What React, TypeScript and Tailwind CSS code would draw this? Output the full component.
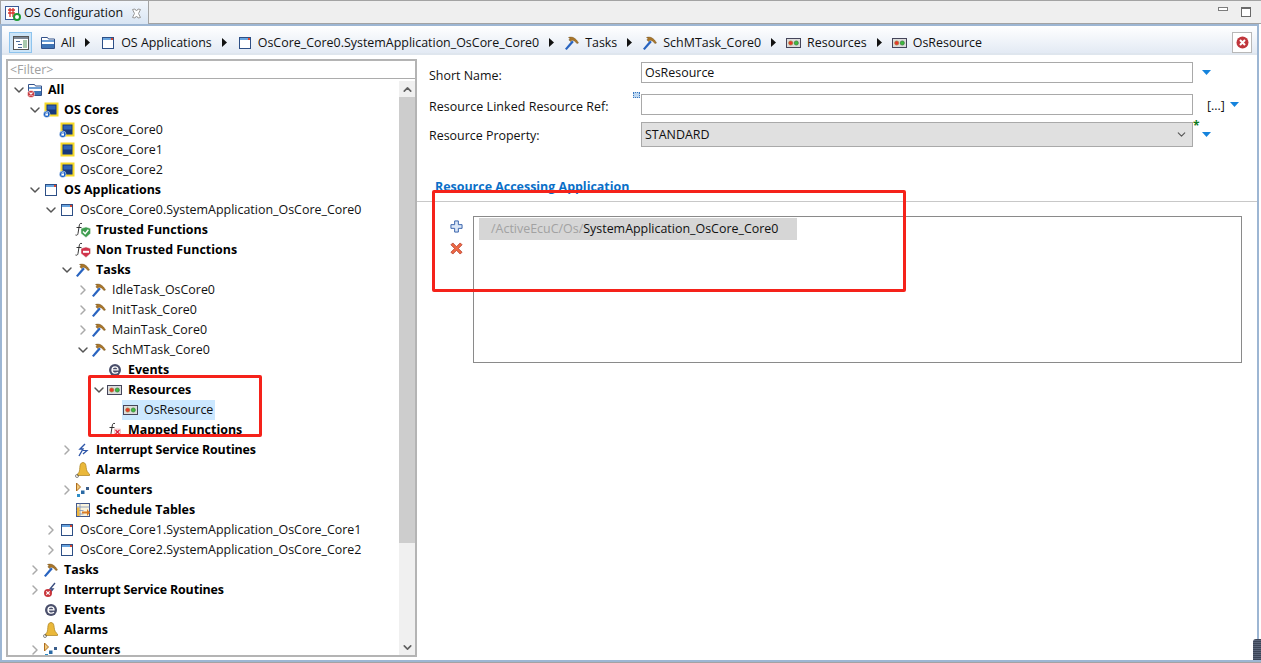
import React from 'react';
import { ChevronDown, ChevronRight, ChevronUp } from 'lucide-react';

type IconName = 'folder' | 'folderErr' | 'chip' | 'chipLock' | 'app' | 'fnOk' | 'fnNo' | 'fnMap' | 'task' | 'event' | 'res' | 'irq' | 'irqErr' | 'bell' | 'counter' | 'table';

const IconImg: React.FC<{ name: IconName }> = ({ name }) => {
  const box = { width: 16, height: 16, viewBox: '0 0 16 16', className: 'shrink-0' };
  switch (name) {
    case 'folder':
    case 'folderErr':
      return (
        <svg {...box}>
          <path d="M1.500 2.500h6l1 1.500h6v9.500h-13z" fill="#fff" stroke="#33528a" />
          <rect x="2" y="5" width="12" height="2" fill="#6d9fd6" />
          <rect x="2" y="9" width="12" height="4" fill="#3f74b5" />
          {name === 'folderErr' && (
            <>
              <circle cx="4" cy="12" r="3.600" fill="#c9363c" stroke="#fff" strokeWidth=".6" />
              <path d="m2.500 10.500 3 3m0-3-3 3" stroke="#fff" strokeWidth="1.100" />
            </>
          )}
        </svg>
      );
    case 'chip':
    case 'chipLock':
      return (
        <svg {...box}>
          <rect x="1.500" y=".5" width="14" height="14" fill="#f6d92a" />
          <rect x="3.500" y="2.500" width="10" height="10" fill="#16397c" />
          <rect x="4.500" y="3.500" width="8" height="4" fill="#2f62b4" />
          {name === 'chipLock' && (
            <>
              <circle cx="3.700" cy="12.300" r="3.300" fill="#1c62c4" stroke="#fff" strokeWidth=".5" />
              <rect x="2.400" y="11.600" width="2.600" height="2" fill="#fff" />
              <path d="M2.900 11.600v-1h1.600v1" fill="none" stroke="#fff" strokeWidth=".6" />
            </>
          )}
        </svg>
      );
    case 'app':
      return (
        <svg {...box}>
          <rect x="2.500" y="2.500" width="11" height="11" fill="#fff" stroke="#2d4f86" />
          <rect x="3" y="3" width="10" height="2" fill="#68a4df" />
          <rect x="11" y="3" width="2" height="2" fill="#d9482f" />
        </svg>
      );
    case 'fnOk':
    case 'fnNo':
      return (
        <svg {...box}>
          <path d="M7 1.500C5 1 4.500 2 4.200 4L3 11.500C2.700 13 2 13.500.5 13M1.500 5.500h5" fill="none" stroke="#222" strokeWidth=".9" />
          <path d="M6 6.500 11 5l4.500 1.500v5L11 15.500 6 11.500z" fill={name === 'fnOk' ? '#3e9d4f' : '#d1344b'} stroke="#e8f0e8" strokeWidth=".5" />
          {name === 'fnOk'
            ? <path d="m8 9.500 2.200 2.300 3.200-4" fill="none" stroke="#fff" strokeWidth="1.400" />
            : <rect x="8" y="8.800" width="6" height="2" fill="#fff" />}
        </svg>
      );
    case 'fnMap':
      return (
        <svg {...box}>
          <path d="M8 1.500C6 1 5.500 2 5.200 4L4 11.500C3.700 13 3 13.500 1.500 13M2.500 5.500h5" fill="none" stroke="#222" strokeWidth=".9" />
          <rect x="7.500" y="7" width="6" height="6" fill="#fbe5e5" stroke="#e8a0a0" strokeWidth=".5" />
          <path d="m8.500 8 4 4m0-4-4 4" stroke="#d2203c" strokeWidth="1.100" />
        </svg>
      );
    case 'task':
      return (
        <svg {...box}>
          <path d="m1 13.800 7-8.300 1.800 1.500L2.700 15z" fill="#2763c0" />
          <path d="M4.500 2.500C8 1.200 12 3 14.500 8l-1.600.6C11.500 6.300 9.500 5 7.800 5.200L6.500 6.500 4.800 4.800 6.200 3.800z" fill="#a9762a" stroke="#6b4a18" strokeWidth=".4" />
        </svg>
      );
    case 'event':
      return (
        <svg {...box}>
          <circle cx="8" cy="8" r="6" fill="#4a4f6b" />
          <path d="M4.800 7.800h6.200c0-4-6-4-6 .2 0 3.500 4 3.800 6 2.200" fill="none" stroke="#fff" strokeWidth="1.300" />
        </svg>
      );
    case 'res':
      return (
        <svg {...box}>
          <rect x=".5" y="3.500" width="14" height="9" fill="#dcdcdc" stroke="#45455a" />
          <circle cx="4.700" cy="8" r="2.100" fill="#e8352d" stroke="#9b7a20" strokeWidth=".6" />
          <circle cx="10.300" cy="8" r="2.100" fill="#3fbb3f" stroke="#2a6c2a" strokeWidth=".6" />
        </svg>
      );
    case 'irq':
      return (
        <svg {...box}>
          <path d="M10 2 5 7h3l-4 7" fill="none" stroke="#2e56a8" strokeWidth="1.400" />
          <path d="M8 8.500h4L8 12" fill="none" stroke="#2e56a8" strokeWidth="1.200" />
        </svg>
      );
    case 'irqErr':
      return (
        <svg {...box}>
          <path d="M12 1 7 7h3L6 12" fill="none" stroke="#3d4f80" strokeWidth="1.400" />
          <circle cx="5" cy="11" r="4" fill="#c9363c" />
          <path d="m3.300 9.300 3.400 3.400m0-3.400-3.400 3.400" stroke="#fff" strokeWidth="1.200" />
        </svg>
      );
    case 'bell':
      return (
        <svg {...box}>
          <path d="M8 .500c2.500 0 3 2.500 3.200 5 .2 3 1.300 5 3.300 6.500v1.500H2.500V12C4.500 10.500 4.600 8.500 4.800 5.500 5 3 5.500.500 8 .500z" fill="#eab83a" stroke="#a9801c" strokeWidth=".7" />
          <circle cx="2" cy="14" r="1.500" fill="none" stroke="#555" strokeWidth=".7" />
        </svg>
      );
    case 'counter':
      return (
        <svg {...box}>
          <path d="M1.500 1v8l4-4z" fill="#f3cb7c" stroke="#ae6d1d" />
          <rect x="2" y="12" width="3" height="3" fill="#2f8ec7" />
          <rect x="6" y="8.500" width="3.500" height="3.500" fill="#2a6aa5" />
          <rect x="11" y="5" width="3" height="3" fill="#3a5d8a" />
        </svg>
      );
    case 'table':
      return (
        <svg {...box}>
          <rect x="1.500" y="1.500" width="13" height="13" fill="#fbf4dc" stroke="#44588a" />
          <path d="M1.500 5h13M1.500 8.500h7M1.500 12h7M5 1.500v13" stroke="#7b8fb8" strokeWidth=".8" />
          <rect x="2" y="5.500" width="2.500" height="8.500" fill="#eeb53c" />
          <path d="M7 9.500h5V7l3 3.500-3 3.500v-2.500H7z" fill="#d97b24" />
        </svg>
      );
  }
};

type Row = { depth: number; open?: boolean; icon: IconName; label: string; bold?: boolean; selected?: boolean; tight?: boolean };

const rows: Row[] = [
  { depth: 0, open: true, icon: 'folderErr', label: 'All', bold: true },
  { depth: 1, open: true, icon: 'chipLock', label: 'OS Cores', bold: true },
  { depth: 2, icon: 'chipLock', label: 'OsCore_Core0' },
  { depth: 2, icon: 'chip', label: 'OsCore_Core1' },
  { depth: 2, icon: 'chipLock', label: 'OsCore_Core2' },
  { depth: 1, open: true, icon: 'app', label: 'OS Applications', bold: true },
  { depth: 2, open: true, icon: 'app', label: 'OsCore_Core0.SystemApplication_OsCore_Core0' },
  { depth: 3, icon: 'fnOk', label: 'Trusted Functions', bold: true },
  { depth: 3, icon: 'fnNo', label: 'Non Trusted Functions', bold: true },
  { depth: 3, open: true, icon: 'task', label: 'Tasks', bold: true },
  { depth: 4, open: false, icon: 'task', label: 'IdleTask_OsCore0' },
  { depth: 4, open: false, icon: 'task', label: 'InitTask_Core0' },
  { depth: 4, open: false, icon: 'task', label: 'MainTask_Core0' },
  { depth: 4, open: true, icon: 'task', label: 'SchMTask_Core0' },
  { depth: 5, icon: 'event', label: 'Events', bold: true },
  { depth: 5, open: true, icon: 'res', label: 'Resources', bold: true },
  { depth: 6, icon: 'res', label: 'OsResource', selected: true },
  { depth: 5, icon: 'fnMap', label: 'Mapped Functions', bold: true },
  { depth: 3, open: false, icon: 'irq', label: 'Interrupt Service Routines', bold: true, tight: true },
  { depth: 3, icon: 'bell', label: 'Alarms', bold: true },
  { depth: 3, open: false, icon: 'counter', label: 'Counters', bold: true },
  { depth: 3, icon: 'table', label: 'Schedule Tables', bold: true },
  { depth: 2, open: false, icon: 'app', label: 'OsCore_Core1.SystemApplication_OsCore_Core1' },
  { depth: 2, open: false, icon: 'app', label: 'OsCore_Core2.SystemApplication_OsCore_Core2' },
  { depth: 1, open: false, icon: 'task', label: 'Tasks', bold: true },
  { depth: 1, open: false, icon: 'irqErr', label: 'Interrupt Service Routines', bold: true, tight: true },
  { depth: 1, icon: 'event', label: 'Events', bold: true },
  { depth: 1, icon: 'bell', label: 'Alarms', bold: true },
  { depth: 1, open: false, icon: 'counter', label: 'Counters', bold: true },
];

const crumbs: { icon: IconName; label: string }[] = [
  { icon: 'folder', label: 'All' },
  { icon: 'app', label: 'OS Applications' },
  { icon: 'app', label: 'OsCore_Core0.SystemApplication_OsCore_Core0' },
  { icon: 'task', label: 'Tasks' },
  { icon: 'task', label: 'SchMTask_Core0' },
  { icon: 'res', label: 'Resources' },
  { icon: 'res', label: 'OsResource' },
];

const DropArrow = () => (
  <svg width="9" height="5" viewBox="0 0 9 5" className="shrink-0">
    <path d="M0 0h9L4.500 5z" fill="#1583dc" />
  </svg>
);

const TreeRow: React.FC<{ row: Row }> = ({ row }) => (
  <div className="flex h-5 items-center" style={{ paddingLeft: 3 + row.depth * 16 }}>
    <span className="flex w-4 shrink-0 justify-center">
      {row.open === true && <ChevronDown size={16} strokeWidth={2.2} className="text-[#555]" />}
      {row.open === false && <ChevronRight size={16} strokeWidth={2.2} className="text-[#aaa]" />}
    </span>
    <span className={`flex h-5 items-center gap-[5px] pr-[2px] ${row.selected ? 'ml-[-1px] bg-[#cce8ff] pl-[1px]' : ''}`}>
      <IconImg name={row.icon} />
      <span className={`whitespace-nowrap ${row.bold ? 'font-bold text-black' : 'text-[#111]'} ${row.tight ? 'tracking-[-0.15px]' : ''}`}>{row.label}</span>
    </span>
  </div>
);

const App: React.FC = () => {
  return (
    <div className="relative flex h-[663px] w-[1261px] flex-col overflow-hidden bg-white font-['Open_Sans',sans-serif] text-[12.45px] leading-none text-[#111]">
      {/* tab strip */}
      <div className="flex h-[24px] shrink-0 items-stretch">
        <div className="flex w-[149px] items-center gap-[3px] border-x border-t border-[#a3a3a3] bg-gradient-to-b from-[#f2f6fb] to-[#d9e5f3] pl-[4px] pt-[1px]">
          <svg width="16" height="16" viewBox="0 0 16 16" className="shrink-0">
            <rect x=".5" y="1.500" width="13" height="13" fill="#fff" stroke="#3a5a95" />
            <path d="M3 5h7M3 8h7M5 3v9M8 3v9" stroke="#d8342c" strokeWidth="1.300" />
            <circle cx="12" cy="12" r="3" fill="#fff" stroke="#1e9a32" strokeWidth="2" />
          </svg>
          <span className="whitespace-nowrap pt-[1px]">OS Configuration</span>
          <svg width="11" height="11" viewBox="0 0 11 11" className="ml-[5px] shrink-0">
            <path d="M1.500 1.500 4 1l1.500 2L7 1l2.500.5L7.500 5.500l2 4L7 10 5.500 8 4 10l-2.500-.5 2-4z" fill="#fff" stroke="#9a9a9a" />
          </svg>
        </div>
        <div className="flex flex-1 items-center justify-end gap-[13px] border-y border-[#a3a3a3] bg-[#efefef] pr-[10px]">
          <span className="mb-[6px] h-[4px] w-[10px] border border-[#7d7d7d] bg-white" />
          <span className="h-[10px] w-[10px] border border-t-2 border-[#6a6a6a] bg-white" />
        </div>
      </div>

      {/* editor frame */}
      <div className="mr-[2px] flex min-h-0 flex-1 flex-col border-x-2 border-t-2 border-[#9db6d3]">
        <div className="flex h-[29px] shrink-0 items-center border-b-2 border-[#dfe6ee] bg-gradient-to-b from-white to-[#e3eaf4] pl-[7px] pr-[5px] pt-[6px]">
          <div className="flex h-[21px] w-[23px] items-center justify-center border border-[#8ec4ee] bg-[#cce4f7]">
            <svg width="16" height="14" viewBox="0 0 16 14">
              <rect x=".5" y=".5" width="15" height="13" fill="#fff" stroke="#555" />
              <rect x="1" y="1" width="14" height="2" fill="#7d8794" />
              <path d="M3 5h4v1H3zM5 8h4v1H5zM5 11h4v1H5z" fill="#4a6a9a" />
              <rect x="10" y="4" width="4" height="8" fill="#a9cbb0" />
            </svg>
          </div>
          <div className="ml-[8px] flex items-center">
            {crumbs.map((c, i) => (
              <React.Fragment key={i}>
                {i > 0 && (
                  <svg width="5" height="9" viewBox="0 0 5 9" className="mx-[10px] shrink-0">
                    <path d="M0 0v9l5-4.500z" fill="#111" />
                  </svg>
                )}
                <span className="flex items-center gap-[5px]">
                  <IconImg name={c.icon} />
                  <span className="whitespace-nowrap pt-[2px]">{c.label}</span>
                </span>
              </React.Fragment>
            ))}
          </div>
          <div className="ml-auto flex h-[21px] w-[20px] items-center justify-center border border-[#b8b8b8] bg-white">
            <svg width="13" height="13" viewBox="0 0 13 13">
              <circle cx="6.500" cy="6.500" r="6" fill="#c0363c" />
              <path d="m4 4 5 5m0-5-5 5" stroke="#fff" strokeWidth="2" />
            </svg>
          </div>
        </div>

        <div className="flex min-h-0 flex-1">
          {/* outline tree */}
          <div className="ml-[4px] mt-[4px] flex h-[598px] w-[411px] shrink-0 flex-col border-2 border-[#b4b4b4]">
            <div className="flex h-[18px] shrink-0 items-center border-b border-[#acacac] pl-[2px] pt-[2px] text-[#a0a0a0]">&lt;Filter&gt;</div>
            <div className="flex min-h-0 flex-1">
              <div className="min-w-0 flex-1 overflow-hidden pt-[1px]">
                {rows.map((r, i) => <TreeRow key={i} row={r} />)}
              </div>
              <div className="mt-[2px] flex w-[16px] shrink-0 flex-col bg-[#f0f0f0]">
                <span className="flex h-[16px] items-center justify-center"><ChevronUp size={13} strokeWidth={3} className="text-[#606060]" /></span>
                <span className="h-[446px] bg-[#cdcdcd]" />
                <span className="mt-auto flex h-[16px] items-center justify-center"><ChevronDown size={13} strokeWidth={3} className="text-[#606060]" /></span>
              </div>
            </div>
          </div>

          {/* form */}
          <div className="flex min-w-0 flex-1 flex-col pt-[7px]">
            <div className="flex h-[21px] items-center pl-[12px]">
              <span className="w-[212px] pt-[8px]">Short Name:</span>
              <div className="flex h-[21px] w-[552px] items-center border border-[#a9a9a9] pl-[3px] pt-[2px]">OsResource</div>
              <span className="ml-[9px] mb-[1px]"><DropArrow /></span>
            </div>
            <div className="relative mt-[11px] flex h-[21px] items-center pl-[12px]">
              <span className="w-[212px] whitespace-nowrap pt-[5px] tracking-[0.07px]">Resource Linked Resource Ref:</span>
              <div className="h-[21px] w-[552px] border border-[#a9a9a9]" />
              <span className="ml-[14px] pt-[3px]">[...]</span>
              <span className="ml-[5px] mb-[1px]"><DropArrow /></span>
              <span className="absolute left-[216px] top-[-2px] h-[6px] w-[7px] border border-dotted border-[#3a78c0] bg-[#bcd6f0]" />
            </div>
            <div className="relative mt-[7px] flex h-[25px] items-center pl-[12px]">
              <span className="w-[212px] pt-[4px]">Resource Property:</span>
              <div className="flex h-[25px] w-[552px] items-center justify-between border border-[#a9a9a9] bg-[#e0e0e0] pl-[3px] pr-[4px]">
                <span className="pt-[2px]">STANDARD</span>
                <ChevronDown size={13} className="text-[#555]" />
              </div>
              <span className="ml-[9px]"><DropArrow /></span>
              <span className="absolute left-[776px] top-[-2px] text-[12px] font-bold text-[#0f7a1c]">*</span>
            </div>

            <div className="mt-[34px] border-b border-[#c8c8c8] pb-[8px] pl-[18px] font-bold text-[#0a6fc8]">Resource Accessing Application</div>

            <div className="mt-[14px] flex pl-[33px]">
              <div className="flex w-[23px] shrink-0 flex-col items-start gap-[9px] pt-[4px]">
                <svg width="13" height="13" viewBox="0 0 14 14">
                  <path d="M5 1h4v4h4v4H9v4H5V9H1V5h4z" fill="#dbe7f7" stroke="#2f5ba8" />
                </svg>
                <svg width="13" height="13" viewBox="0 0 14 14">
                  <path d="m1 3 2-2 4 4 4-4 2 2-4 4 4 4-2 2-4-4-4 4-2-2 4-4z" fill="#ee6a45" stroke="#b0301f" strokeWidth=".8" />
                </svg>
              </div>
              <div className="h-[147px] w-[769px] border border-[#8a8a8a] p-[1px] pl-[5px]">
                <div className="flex h-[22px] w-[318px] items-center bg-[#d6d6d6] pl-[12px]">
                  <span className="text-[#a2a2a2]">/ActiveEcuC/Os/</span>
                  <span>SystemApplication_OsCore_Core0</span>
                </div>
              </div>
            </div>
          </div>
        </div>
      </div>
      <div className="h-[3px] shrink-0 border-b border-[#a3a3a3] bg-[#9db6d3]" />

      {/* annotation boxes drawn over the shot */}
      <div className="absolute left-[88px] top-[375px] h-[62px] w-[174px] rounded-[2px] border-[3px] border-[#f5221a]" />
      <div className="absolute left-[432px] top-[190px] h-[102px] w-[474px] rounded-[2px] border-[3px] border-[#f5221a]" />

      {/* taskbar corner peeking in */}
      <div className="absolute left-[1253px] top-[639px] h-[21px] w-[8px] rounded-tl-[3px] bg-[repeating-linear-gradient(#3b4456_0px,#3b4456_1px,#5a6478_1px,#5a6478_2px)]" />
    </div>
  );
};

export default App;
